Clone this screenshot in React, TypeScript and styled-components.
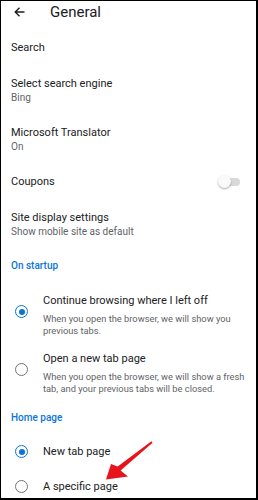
import React from "react";
import styled, { createGlobalStyle } from "styled-components";

const Global = createGlobalStyle`
  html, body { margin: 0; padding: 0; background: #fff; }
  body { font-family: Roboto, "Noto Sans", "Liberation Sans", sans-serif; }
`;

const Frame = styled.div`
  position: relative;
  width: 258px;
  height: 500px;
  box-sizing: border-box;
  border-style: solid;
  border-color: #000;
  border-width: 1px 2px 2px 1px;
  background: #fff;
  overflow: hidden;
`;

const Header = styled.header`
  display: flex;
  align-items: center;
  height: 22px;
  padding-left: 13px;
`;

const HeaderTitle = styled.h1`
  margin: 0 0 0 25px;
  font-size: 15px;
  line-height: 18px;
  font-weight: 400;
  color: #202124;
`;

const Content = styled.div`
  padding-top: 7px;
`;

const Item = styled.div`
  display: flex;
  align-items: center;
  justify-content: space-between;
  padding: 11px 16px 11px 10px;
`;

const Texts = styled.div`
  display: flex;
  flex-direction: column;
  min-width: 0;
`;

const Title = styled.div`
  font-size: 11px;
  line-height: 14px;
  color: #202124;
`;

const Sub = styled.div`
  font-size: 10px;
  line-height: 13px;
  color: #5f6368;
`;

const SectionHeader = styled.div<{ $pt: number; $pb: number }>`
  padding: ${(p) => p.$pt}px 10px ${(p) => p.$pb}px;
  font-size: 10px;
  line-height: 13px;
  font-weight: 500;
  color: #0a74d8;
`;

const RadioRow = styled.div<{ $py: number }>`
  display: flex;
  align-items: center;
  gap: 15px;
  padding: ${(p) => p.$py}px 8px ${(p) => p.$py}px 14px;
`;

const Radio = styled.span<{ $checked?: boolean; $lift?: boolean }>`
  flex-shrink: 0;
  width: 13px;
  height: 13px;
  box-sizing: border-box;
  border-radius: 50%;
  border: 1.5px solid ${(p) => (p.$checked ? "#0a74d8" : "#757575")};
  display: flex;
  align-items: center;
  justify-content: center;
  margin-bottom: ${(p) => (p.$lift ? 7 : 0)}px;
  &::after {
    content: "";
    width: 6px;
    height: 6px;
    border-radius: 50%;
    background: #0a74d8;
    display: ${(p) => (p.$checked ? "block" : "none")};
  }
`;

const Desc = styled.div`
  margin-top: 5px;
  font-size: 9.3px;
  line-height: 11.5px;
  color: #5f6368;
`;

const Switch = styled.span`
  position: relative;
  width: 20px;
  height: 8px;
  border-radius: 4px;
  background: #d9d9d9;
  flex-shrink: 0;
  &::before {
    content: "";
    position: absolute;
    left: -2px;
    top: -3px;
    width: 13px;
    height: 13px;
    border-radius: 50%;
    background: #fafafa;
    box-shadow: 0 1px 2px rgba(0, 0, 0, 0.35);
  }
`;

const Overlay = styled.svg`
  position: absolute;
  left: 0;
  top: 0;
  pointer-events: none;
`;

const BackIcon = () => (
  <svg width="11" height="10" viewBox="0 0 11 10">
    <path
      d="M1 5H10.5M5.5 0.7L1.2 5L5.5 9.3"
      fill="none"
      stroke="#202124"
      strokeWidth="1.4"
    />
  </svg>
);

export default function App() {
  return (
    <>
      <Global />
      <Frame>
        <Header>
          <BackIcon />
          <HeaderTitle>General</HeaderTitle>
        </Header>
        <Content>
          <Item>
            <Texts>
              <Title>Search</Title>
            </Texts>
          </Item>
          <Item>
            <Texts>
              <Title>Select search engine</Title>
              <Sub>Bing</Sub>
            </Texts>
          </Item>
          <Item>
            <Texts>
              <Title>Microsoft Translator</Title>
              <Sub>On</Sub>
            </Texts>
          </Item>
          <Item>
            <Texts>
              <Title>Coupons</Title>
            </Texts>
            <Switch />
          </Item>
          <Item>
            <Texts>
              <Title>Site display settings</Title>
              <Sub>Show mobile site as default</Sub>
            </Texts>
          </Item>
          <SectionHeader $pt={10} $pb={14}>
            On startup
          </SectionHeader>
          <RadioRow $py={8}>
            <Radio $checked $lift />
            <Texts>
              <Title>Continue browsing where I left off</Title>
              <Desc>When you open the browser, we will show you previous tabs.</Desc>
            </Texts>
          </RadioRow>
          <RadioRow $py={8}>
            <Radio $lift />
            <Texts>
              <Title>Open a new tab page</Title>
              <Desc>
                When you open the browser, we will show a fresh tab, and your previous tabs will be
                closed.
              </Desc>
            </Texts>
          </RadioRow>
          <SectionHeader $pt={9} $pb={10}>
            Home page
          </SectionHeader>
          <RadioRow $py={10.5}>
            <Radio $checked />
            <Texts>
              <Title>New tab page</Title>
            </Texts>
          </RadioRow>
          <RadioRow $py={10.5}>
            <Radio />
            <Texts>
              <Title>A specific page</Title>
            </Texts>
          </RadioRow>
        </Content>
        <Overlay width="258" height="500" viewBox="1 1 258 500">
          <polygon
            points="106,479.5 111,464 117.7,466.6 151.4,441.3 152.6,442.7 120.6,470.4 128,476.5"
            fill="#e8141c"
          />
        </Overlay>
      </Frame>
    </>
  );
}
